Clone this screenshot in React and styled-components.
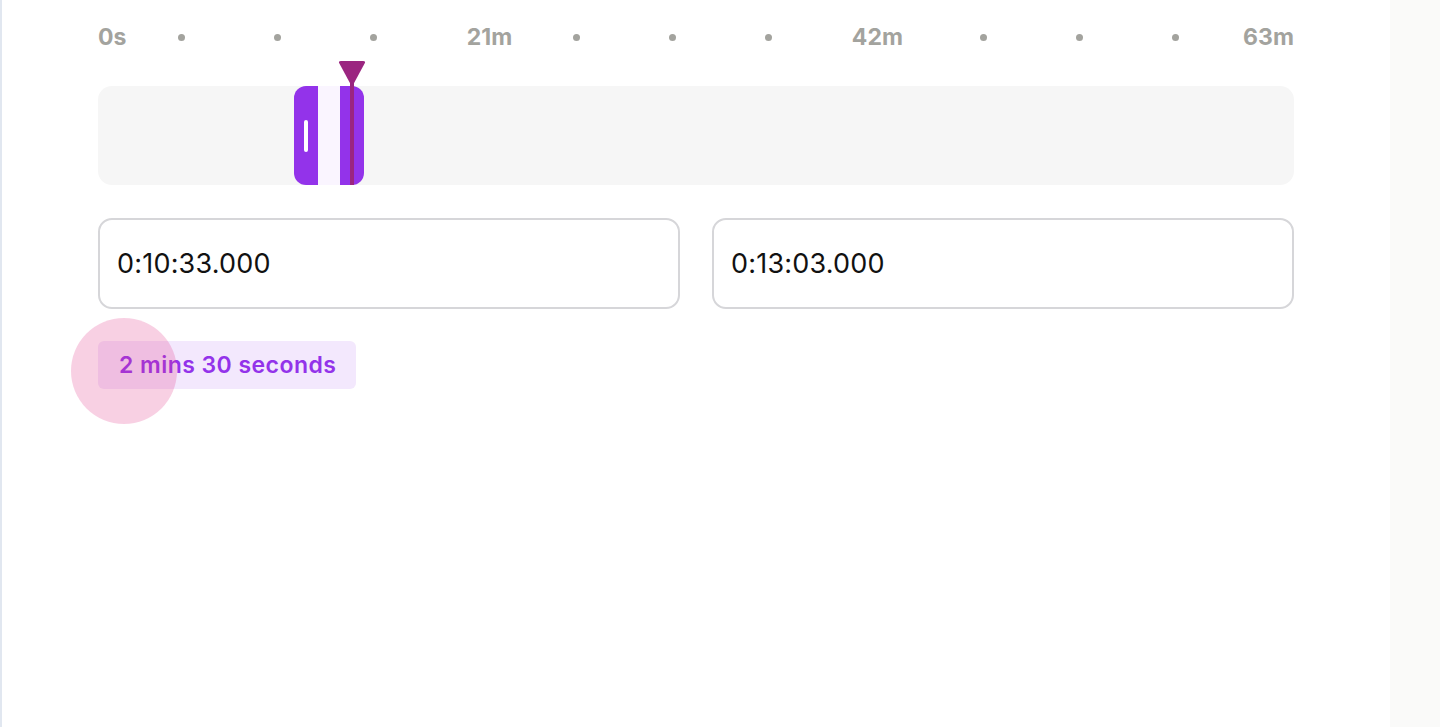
import React from "react";
import styled, { createGlobalStyle } from "styled-components";

const Global = createGlobalStyle`
  html, body { margin: 0; padding: 0; background: #ffffff; }
  body { font-family: Inter, "Noto Sans", sans-serif; }
  * { box-sizing: border-box; }
`;

const Shell = styled.div`
  display: flex;
  width: 1440px;
  height: 727px;
  overflow: hidden;
`;

const LeftRule = styled.div`
  width: 2px;
  background: #e1e7f0;
  flex-shrink: 0;
`;

const Main = styled.main`
  flex: 1;
  background: #ffffff;
  padding: 23px 96px 0 96px;
  display: flex;
  flex-direction: column;
`;

const Side = styled.aside`
  width: 50px;
  flex-shrink: 0;
  background: #fafaf9;
`;

const Scale = styled.div`
  display: grid;
  grid-template-columns: ${(p) => p.$cols};
  height: 28px;
  align-items: center;
`;

const Label = styled.span`
  font-size: 23px;
  font-weight: 700;
  color: #a3a39e;
  line-height: 28px;
  justify-self: ${(p) => p.$align || "center"};
  letter-spacing: 0.1px;
`;

const Dot = styled.span`
  width: 7px;
  height: 7px;
  border-radius: 50%;
  background: #a3a39e;
  justify-self: center;
`;

const Track = styled.div`
  position: relative;
  margin-top: 35px;
  height: 99px;
  background: #f6f6f6;
  border-radius: 14px;
`;

const Selection = styled.div`
  position: absolute;
  top: 0;
  bottom: 0;
  display: flex;
`;

const Handle = styled.div`
  width: 24px;
  background: #9333ea;
  border-radius: ${(p) => (p.$side === "left" ? "12px 0 0 12px" : "0 12px 12px 0")};
  display: flex;
  align-items: center;
  justify-content: center;
`;

const Grip = styled.span`
  width: 4px;
  height: 32px;
  border-radius: 2px;
  background: #ffffff;
`;

const Range = styled.div`
  width: 22px;
  background: #faf5ff;
`;

const Playhead = styled.div`
  position: absolute;
  top: -25px;
  bottom: 0;
  width: 28px;
  display: flex;
  flex-direction: column;
  align-items: center;
`;

const Needle = styled.div`
  width: 4px;
  flex: 1;
  margin-top: -3px;
  background: #9b2580;
`;

const Fields = styled.div`
  display: grid;
  grid-template-columns: 1fr 1fr;
  gap: 32px;
  margin-top: 33px;
`;

const TimeInput = styled.input`
  height: 91px;
  border: 2px solid #d6d6d9;
  border-radius: 14px;
  padding: 0 17px;
  font-family: Inter, "Noto Sans", sans-serif;
  font-size: 27px;
  letter-spacing: 0.2px;
  color: #111111;
  background: #ffffff;
  outline: none;
`;

const BadgeRow = styled.div`
  position: relative;
  margin-top: 32px;
  display: flex;
`;

const Badge = styled.span`
  height: 48px;
  display: inline-flex;
  align-items: center;
  padding: 0 20px 0 21px;
  border-radius: 6px;
  background: #f3e8fd;
  color: #9333ea;
  font-size: 23px;
  font-weight: 600;
  letter-spacing: 0.45px;
`;

const Tap = styled.span`
  position: absolute;
  left: -27px;
  top: -23px;
  width: 106px;
  height: 106px;
  border-radius: 50%;
  background: rgba(225, 60, 140, 0.24);
  pointer-events: none;
`;

const scaleItems = [
  { t: "0s", align: "start" },
  { dot: true },
  { dot: true },
  { dot: true },
  { t: "21m" },
  { dot: true },
  { dot: true },
  { dot: true },
  { t: "42m" },
  { dot: true },
  { dot: true },
  { dot: true },
  { t: "63m", align: "end" },
];

const cols = "35px 96px 96px 96px 137px 36px 156px 36px 183px 28px 164px 28px 105px";

export default function App() {
  return (
    <>
      <Global />
      <Shell>
        <LeftRule />
        <Main>
          <Scale $cols={cols}>
            {scaleItems.map((it, i) =>
              it.dot ? <Dot key={i} /> : <Label key={i} $align={it.align}>{it.t}</Label>
            )}
          </Scale>
          <Track>
            <Selection style={{ left: 196 }}>
              <Handle $side="left">
                <Grip />
              </Handle>
              <Range />
              <Handle $side="right">
                <Grip />
              </Handle>
            </Selection>
            <Playhead style={{ left: 240 }}>
              <svg width="28" height="25" viewBox="0 0 28 25">
                <path
                  d="M3 0 H25 Q28 0 26.6 2.6 L15.4 23.2 Q14 25.4 12.6 23.2 L1.4 2.6 Q0 0 3 0 Z"
                  fill="#9b2580"
                />
              </svg>
              <Needle />
            </Playhead>
          </Track>
          <Fields>
            <TimeInput defaultValue="0:10:33.000" />
            <TimeInput defaultValue="0:13:03.000" />
          </Fields>
          <BadgeRow>
            <Badge>2 mins 30 seconds</Badge>
            <Tap />
          </BadgeRow>
        </Main>
        <Side />
      </Shell>
    </>
  );
}
